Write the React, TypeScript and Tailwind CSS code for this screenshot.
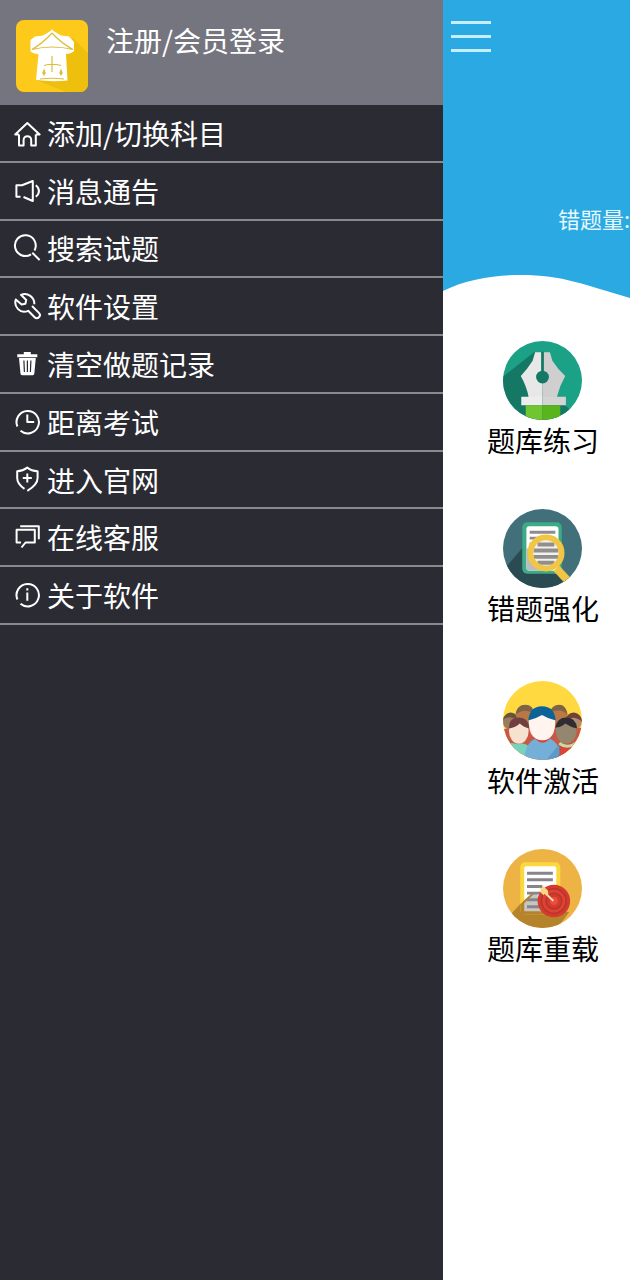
import React from "react";

const HomeIcon = () => (
  <>
    <path d="M6 15.500H2.200L14.300 4L26.600 15.500H22.800" />
    <path d="M6 15.500V26.500H10.600V21A3.700 3.700 0 0 1 18.200 21V26.500H22.800V15.500" />
  </>
);

const NoticeIcon = () => (
  <>
    <path d="M7.5 19.8H3.4V8.3H9L19.8 4V24L10.5 20" />
    <path d="M22.8 8.3C27 11.5 27 16.5 22.8 19.8" />
  </>
);

const SearchIcon = () => (
  <>
    <path d="M18 20.300A10.400 10.400 0 1 1 21.500 16.500" />
    <path d="M19.300 18.800L26.600 26" />
  </>
);

const WrenchIcon = () => (
  <>
    <path d="M21.300 12.200A9.600 9.600 0 0 0 8 2.800L13.200 8L12.400 11.800L8.600 12.500L2.800 7.500C0.500 14.500 7 22.500 15.200 18.800L21.600 25.200A3 3 0 0 0 25.900 20.900L19 14" />
  </>
);

const TrashIcon = () => (
  <>
    <path d="M4.300 5.800H24.300M10.800 3.400H17.800" strokeWidth="3" />
    <path d="M6 8H22.800L21.300 23.800Q21.200 25.200 19.800 25.200H9Q7.600 25.200 7.500 23.800Z" fill="#fff" stroke="none" />
    <path d="M10.900 10.500L11.400 22M14.400 10.500V22M17.900 10.500L17.400 22" stroke="#2b2b34" strokeWidth="1.2" />
  </>
);

const ClockIcon = () => (
  <>
    <path d="M4.400 18.500A11.200 11.200 0 1 1 7.500 22.700" />
    <path d="M14.3 6.5V14.1H21.2" />
  </>
);

const ShieldIcon = () => (
  <>
    <path d="M11.5 22.8C6.5 19.5 4.2 16.5 4.2 12V5.2C8.5 5 11.500 3.800 14.300 1.600C17 3.800 20.200 5 24.600 5.200V12C24.600 17.500 20.500 21.200 14.300 24.800" />
    <path d="M9.8 12H18.8M14.3 7.5V16.5" />
  </>
);

const ChatIcon = () => (
  <>
    <path d="M8.5 24.500L12.500 19.500H21.800V6.700H3.600V19.500H8" />
    <path d="M7.2 3.300H25.800V16.300" />
  </>
);

const InfoIcon = () => (
  <>
    <path d="M4.400 18.500A11.200 11.200 0 1 1 7.500 22.700" />
    <path d="M14.3 11.500V19.700M14.3 7.200V9.400" />
  </>
);

const menuItems = [
  { label: "添加/切换科目", Icon: HomeIcon },
  { label: "消息通告", Icon: NoticeIcon },
  { label: "搜索试题", Icon: SearchIcon },
  { label: "软件设置", Icon: WrenchIcon },
  { label: "清空做题记录", Icon: TrashIcon },
  { label: "距离考试", Icon: ClockIcon },
  { label: "进入官网", Icon: ShieldIcon },
  { label: "在线客服", Icon: ChatIcon },
  { label: "关于软件", Icon: InfoIcon },
];

const Logo = () => (
  <svg className="size-18 shrink-0 rounded-lg" viewBox="0 0 72 72" aria-hidden="true">
    <rect width="72" height="72" fill="#fdca1b" />
    <path d="M57 18L72 33V72H50L20 60Z" fill="#eec00d" />
    <path
      d="M34.500 11Q36 8 37.500 11L45 15.500L53 16.500L58 22V31Q55 34 50 34L51.500 60.500Q36 62 20 60L22.500 34Q16 33.500 14.500 31V20L19 16.500L27 15.500Z"
      fill="#fff"
    />
    <g fill="none" stroke="#dcbc3c" strokeWidth="1.2">
      <path d="M36 13Q27 23 16 29.500Q36 24.500 57 29.500Q45 23 36 13" />
      <path d="M36 36V52M28 45.500Q36 43 45 45.500" />
      <path d="M24 59Q36 57.500 48 59" />
    </g>
    <path d="M28 48.500L29.800 53L28 56L26.200 53ZM45 48.500L46.800 53L45 56L43.200 53Z" fill="#dcbc3c" />
  </svg>
);

const PracticeArt = () => (
  <>
    <rect width="80" height="80" fill="#1ba185" />
    <path d="M32 11L0 36V80H62L70 72L63 65L40 50Z" fill="#157865" />
    <path d="M40 11.300H32.500L30 20Q25 28 18 35.500Q24 46 26 57H40Z" fill="#e8e8e8" />
    <path d="M40 11.300H47.500L50 20Q55 28 63 35.500Q57 46 54.500 57H40Z" fill="#cfcfcf" />
    <path d="M38.600 11H41.400V32H38.600Z" fill="#157865" />
    <circle cx="40" cy="36.500" r="6.500" fill="#157865" />
    <path d="M18.500 56.500H40V65H18.500Z" fill="#ededed" />
    <path d="M40 56.500H63.700V65H40Z" fill="#d4d4d4" />
    <path d="M23 65H40V80H23Z" fill="#71c530" />
    <path d="M40 65H58V80H40Z" fill="#59b51d" />
  </>
);

const MistakesArt = () => (
  <>
    <rect width="80" height="80" fill="#41707b" />
    <path d="M21 38L0 62V80H66L68 70L55 58Z" fill="#2b4b53" />
    <rect x="19.500" y="13.500" width="40" height="52" rx="5" fill="#3cac87" />
    <rect x="23.700" y="17.500" width="32.500" height="45" rx="3" fill="#fff" />
    <path d="M23.700 39L49 62.500H26Q23.700 62.500 23.700 60Z" fill="#b9bdc2" />
    <path d="M27 23.500H53M27 29.500H53M27 35.500H53" stroke="#918b8b" strokeWidth="3" />
    <circle cx="43.500" cy="44.500" r="13.500" fill="#f1f1f1" />
    <path d="M35 36H52M31 42H56M31 48.500H56M35 54.500H52" stroke="#928e89" strokeWidth="4" />
    <path d="M54 60L67 74" stroke="#f1c644" strokeWidth="8" />
    <circle cx="43.500" cy="44.500" r="15.800" fill="none" stroke="#f1c644" strokeWidth="6" />
  </>
);

const ActivateArt = () => (
  <>
    <rect width="80" height="80" fill="#ffd93f" />
    <path d="M0 49L14 45L24 36L52 38L80 48V80H0Z" fill="#c95743" />
    <circle cx="7.500" cy="41" r="8" fill="#9b7b5b" />
    <path d="M0 39Q2 32 8 32Q15 33 15 40Q8 34 0 39Z" fill="#67513f" />
    <circle cx="22" cy="34" r="9" fill="#b87945" />
    <path d="M12.500 34Q14 24 22.500 24Q31 24 32 34Q23 26 12.500 34Z" fill="#806347" />
    <circle cx="56.500" cy="34" r="9" fill="#b87945" />
    <path d="M47 33Q49 24 57 24Q64 24 65 34Q57 26 47 33Z" fill="#806347" />
    <circle cx="72" cy="41" r="8" fill="#b68b69" />
    <path d="M63 40Q65 32 72 32Q79 33 80 41Q71 34 63 40Z" fill="#6f403c" />
    <path d="M0 80V65Q5 61 15 64Q25 61 28 70V80Z" fill="#77d2bc" />
    <path d="M51 80Q50 66 59 63H80V80Z" fill="#d9443b" />
    <path d="M57 63Q66 70 76 61" fill="none" stroke="#c6dca0" strokeWidth="3" />
    <ellipse cx="16" cy="50.500" rx="10" ry="13" fill="#f6e2ce" />
    <path d="M6 48Q6 37 16 37Q26 37 27 48Q21 47 17 43Q13 47 6 48Z" fill="#703f40" />
    <ellipse cx="64" cy="50.500" rx="10.500" ry="13" fill="#94866f" />
    <path d="M53 47Q55 37 64 37Q74 37 75 48Q69 47 63 43Q59 47 53 47Z" fill="#302c34" />
    <path d="M22 80Q22 62 34 58H47Q57 63 57 72L54 80Z" fill="#73afd7" />
    <path d="M44 80L57 64V80Z" fill="#5b9bc7" />
    <path d="M33 57Q40 63 47 57V59Q40 66 33 59Z" fill="#d9443b" />
    <path d="M26 40Q27 28 40 28Q52 28 53 40Q53 60 40 60Q26 60 26 40Z" fill="#fff5ee" />
    <path d="M25.500 40Q27 25.500 39.500 25.500Q52 25.500 53.500 40Q45 38 39.500 34.500Q34 38 25.500 40Z" fill="#0c6398" />
  </>
);

const ReloadArt = () => (
  <>
    <rect width="80" height="80" fill="#eeb345" />
    <path d="M21 52L8 66V80H55L67 64Z" fill="#b5832b" />
    <rect x="17.500" y="13.500" width="40.500" height="53" rx="5" fill="#fcd83f" />
    <rect x="21.500" y="17.500" width="32.500" height="45.500" rx="2" fill="#fff" />
    <path d="M21.500 52L30 44L44 62V66.500H22Q17.500 66.500 17.500 62V56Z" fill="#b5832b" />
    <path d="M21.500 55L33 44L48 63H21.500Z" fill="#c9c6c2" />
    <path
      d="M24.300 24.500H50.500M24.300 31.200H50.500M24.300 38H40M24.300 44.700H38M24.300 51.400H38M24.300 58.500H38"
      stroke="#85858a"
      strokeWidth="3"
    />
    <circle cx="51.500" cy="52.700" r="16.500" fill="#d53a2e" />
    <circle cx="51.500" cy="52.700" r="12.500" fill="#dd4233" stroke="#b5352a" strokeWidth="1.500" />
    <circle cx="51.500" cy="52.700" r="8" fill="#d53a2e" stroke="#b5352a" strokeWidth="1.500" />
    <circle cx="51.500" cy="52.700" r="4" fill="#e8503c" />
    <path d="M40 42L51 52.500" stroke="#f9e6bd" strokeWidth="2" />
    <path d="M36.500 39L40 40L39.500 36.500L45.500 42L46 48L42 44.500L41.500 47L36.500 42.500L39 42Z" fill="#f8d887" />
  </>
);

const tileGroups = [
  [
    { label: "题库练习", Art: PracticeArt },
    { label: "错题强化", Art: MistakesArt },
  ],
  [
    { label: "软件激活", Art: ActivateArt },
    { label: "题库重载", Art: ReloadArt },
  ],
];

const App: React.FC = () => {
  return (
    <div className="flex min-h-screen overflow-hidden bg-white font-['Noto_Sans_CJK_SC',sans-serif]">
      {/* drawer */}
      <aside className="w-[443px] shrink-0 bg-[#2b2b34] text-white">
        <header className="flex h-[105px] items-start gap-[18px] bg-[#75757f] px-4 pt-5">
          <Logo />
          <a href="#login" className="text-[28px] leading-10">
            注册/会员登录
          </a>
        </header>
        <nav className="grid h-[520px] grid-rows-9">
          {menuItems.map(({ label, Icon }) => (
            <button
              key={label}
              type="button"
              className="flex items-center gap-1.5 border-b-2 border-[#8a8a8e] pl-[13px] text-left text-[28px] leading-10"
            >
              <svg
                className="size-7 shrink-0"
                viewBox="0 0 28 28"
                fill="none"
                stroke="#fff"
                strokeWidth="2"
                strokeLinejoin="round"
                aria-hidden="true"
              >
                <Icon />
              </svg>
              {label}
            </button>
          ))}
        </nav>
      </aside>

      {/* page behind the drawer */}
      <main className="min-w-0 flex-1">
        <header className="flex h-[298px] flex-col justify-between bg-[#2aa9e2]">
          <button type="button" aria-label="菜单" className="flex w-12 flex-col gap-[11px] pt-[21px] pl-2">
            <span className="h-[3px] w-full bg-[#c5effc]" />
            <span className="h-[3px] w-full bg-[#c5effc]" />
            <span className="h-[3px] w-full bg-[#c5effc]" />
          </button>
          <div>
            <p className="mb-10 text-right text-[22px] leading-8 whitespace-nowrap text-[#e6f8ff]">错题量:</p>
            <svg className="block h-6 w-full" viewBox="0 0 187 24" preserveAspectRatio="none" aria-hidden="true">
              <path d="M0 17C24 5 52 1 78 1C120 1 142 11 187 24H0Z" fill="#fff" />
            </svg>
          </div>
        </header>
        <div className="flex flex-col gap-[53px] pt-[43px] pl-[13px]">
          {tileGroups.map((group, i) => (
            <div key={i} className="flex flex-col items-center gap-[49px]">
              {group.map(({ label, Art }) => (
                <button
                  key={label}
                  type="button"
                  className="flex flex-col items-center text-[28px] leading-10 text-black"
                >
                  <svg className="size-[79px] rounded-full" viewBox="0 0 80 80" aria-hidden="true">
                    <Art />
                  </svg>
                  {label}
                </button>
              ))}
            </div>
          ))}
        </div>
      </main>
    </div>
  );
};

export default App;
